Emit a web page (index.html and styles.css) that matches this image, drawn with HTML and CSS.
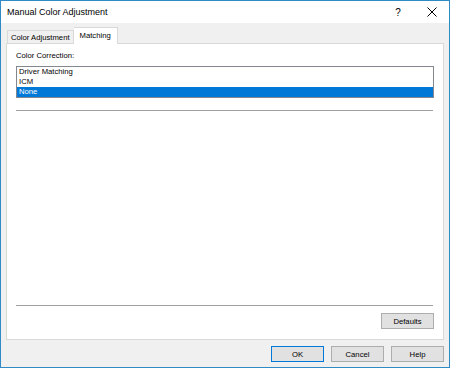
FILE: index.html
```html
<!DOCTYPE html>
<html lang="en">
<head>
  <meta charset="UTF-8">
  <title>Manual Color Adjustment</title>
  <link rel="stylesheet" href="styles.css">
</head>
<body>
  <div class="window">
    <!-- Title bar -->
    <div class="titlebar">
      <span class="title">Manual Color Adjustment</span>
      <div class="caption-btns">
        <span class="caption-btn">?</span>
        <span class="caption-btn">
          <svg width="10" height="10" viewBox="0 0 10 10">
            <path d="M0.5 0.5 L9.5 9.5 M9.5 0.5 L0.5 9.5" stroke="#000" stroke-width="1" fill="none"/>
          </svg>
        </span>
      </div>
    </div>

    <div class="content">
      <!-- Tabs -->
      <div class="tabs">
        <div class="tab">Color Adjustment</div>
        <div class="tab active">Matching</div>
      </div>

      <!-- Tab page -->
      <div class="panel">
        <div class="label">Color Correction:</div>
        <div class="listbox">
          <div class="list-item">Driver Matching</div>
          <div class="list-item">ICM</div>
          <div class="list-item selected">None</div>
        </div>
        <div class="separator first"></div>
        <div class="spacer"></div>
        <div class="separator"></div>
        <div class="panel-actions">
          <button class="btn">Defaults</button>
        </div>
      </div>

      <!-- Dialog buttons -->
      <div class="footer">
        <button class="btn default">OK</button>
        <button class="btn">Cancel</button>
        <button class="btn">Help</button>
      </div>
    </div>
  </div>
</body>
</html>
```

FILE: styles.css
```css
body {
  margin: 0;
  font-family: "Liberation Sans", Arial, sans-serif;
  color: #000;
  background: #fff;
}

.window {
  width: 450px;
  height: 368px;
  box-sizing: border-box;
  border: 1px solid #2f8ac6;
  background: #f0f0f0;
  display: flex;
  flex-direction: column;
}

/* Title bar */
.titlebar {
  height: 22px;
  background: #fff;
  display: flex;
  align-items: center;
  justify-content: space-between;
  padding-left: 6px;
}

.title {
  font-size: 9px;
}

.caption-btns {
  display: flex;
  height: 100%;
}

.caption-btn {
  width: 34px;
  display: flex;
  align-items: center;
  justify-content: center;
  font-size: 10px;
}

/* Content */
.content {
  flex: 1;
  display: flex;
  flex-direction: column;
  padding: 4px 5px 0 5px;
  font-size: 7.7px;
}

.tabs {
  display: flex;
  align-items: flex-end;
  height: 16px;
  padding-left: 1px;
}

.tab {
  box-sizing: border-box;
  height: 13px;
  padding: 0 3px;
  border: 1px solid #d9d9d9;
  border-bottom: none;
  display: flex;
  align-items: center;
  background: #f0f0f0;
}

.tab.active {
  height: 17px;
  margin-bottom: -1px;
  padding: 0 6px 2px 6px;
  background: #fff;
  position: relative;
  z-index: 1;
  border-left: none;
}

.panel {
  flex: 1;
  background: #fff;
  border: 1px solid #d9d9d9;
  display: flex;
  flex-direction: column;
  padding: 7px 9px 10px 9px;
}

.label {
  height: 10px;
  line-height: 10px;
  margin-bottom: 5px;
}

.listbox {
  border: 1px solid #828790;
  height: 30px;
}

.list-item {
  height: 10px;
  line-height: 10px;
  padding-left: 2px;
}

.list-item.selected {
  background: #0078d7;
  color: #fff;
}

.separator {
  border-top: 1px solid #a0a0a0;
  margin-right: 1px;
}

.separator.first {
  margin-top: 12px;
}

.spacer {
  flex: 1;
}

.panel-actions {
  display: flex;
  justify-content: flex-end;
  margin-top: 7px;
}

.btn {
  width: 53px;
  height: 16px;
  padding: 0;
  font-family: inherit;
  font-size: 7.7px;
  color: #000;
  background: #e1e1e1;
  border: 1px solid #adadad;
}

.btn.default {
  border-color: #0078d7;
}

.footer {
  display: flex;
  justify-content: flex-end;
  gap: 7px;
  padding: 6px 0 5px 0;
}
```
